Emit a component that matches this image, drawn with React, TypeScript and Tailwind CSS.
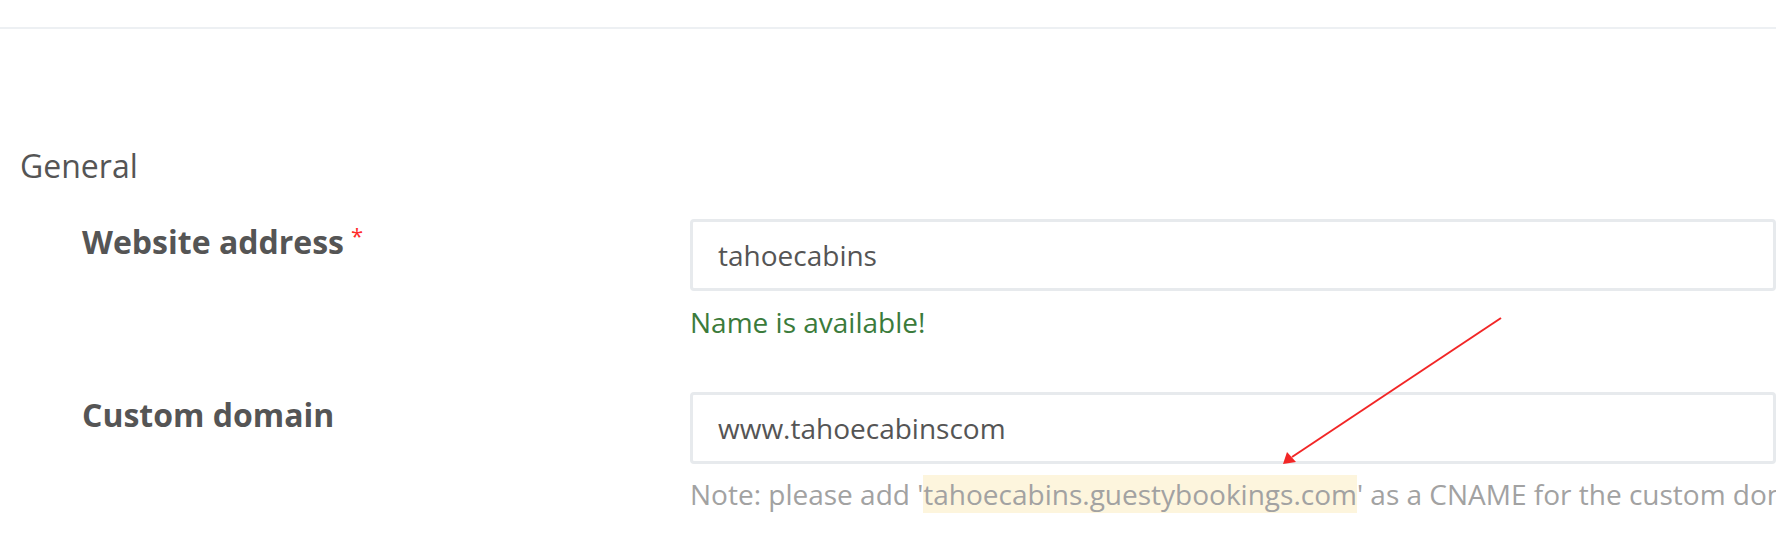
import React from 'react';

function Field({
  label,
  required,
  value,
  children,
}: {
  label: string;
  required?: boolean;
  value: string;
  children?: React.ReactNode;
}) {
  return (
    <div className="flex items-start pl-[82px]">
      <div className="w-[608px] shrink-0 mt-[3px] text-[32px] leading-[40px] font-bold text-[#555555]">
        {label}
        {required && (
          <span className="ml-[7px] text-[22px] leading-none font-normal text-[#ff2a2a] align-[10px]">*</span>
        )}
      </div>
      <div className="flex-1 min-w-0">
        <div className="h-[72px] flex items-center border-[3px] border-[#e7eaed] rounded-[4px] pl-[25px] text-[28px] text-[#555555] whitespace-nowrap">
          {value}
        </div>
        {children}
      </div>
    </div>
  );
}

export default function App() {
  return (
    <div className="relative w-[1776px] h-[546px] overflow-hidden bg-white font-['Open_Sans',sans-serif]">
      {/* Top bar divider */}
      <div className="h-[27px]" />
      <div className="h-[2px] bg-[#edf0f3]" />

      <div className="pt-[117px] pl-[20px] text-[32px] leading-[40px] text-[#555555]">General</div>

      <div className="mt-[33px]">
        <Field label="Website address" required value="tahoecabins">
          <div className="mt-[11px] text-[28px] leading-[40px] text-[#3b7b3b]">Name is available!</div>
        </Field>
      </div>

      <div className="mt-[50px]">
        <Field label="Custom domain" value="www.tahoecabinscom">
          <div className="mt-[10px] text-[28px] leading-[40px] text-[#a2a2a2] whitespace-nowrap">
            Note: please add '<span className="bg-[#fdf5dd]">tahoecabins.guestybookings.com</span>' as a CNAME for
            the custom domain
          </div>
        </Field>
      </div>

      {/* Annotation arrow */}
      <svg className="absolute left-0 top-0 pointer-events-none" width="1776" height="546">
        <line x1="1501" y1="318" x2="1292" y2="457" stroke="#f22626" strokeWidth="2" />
        <polygon points="1283,464 1287,452 1296,462" fill="#f22626" />
      </svg>
    </div>
  );
}
